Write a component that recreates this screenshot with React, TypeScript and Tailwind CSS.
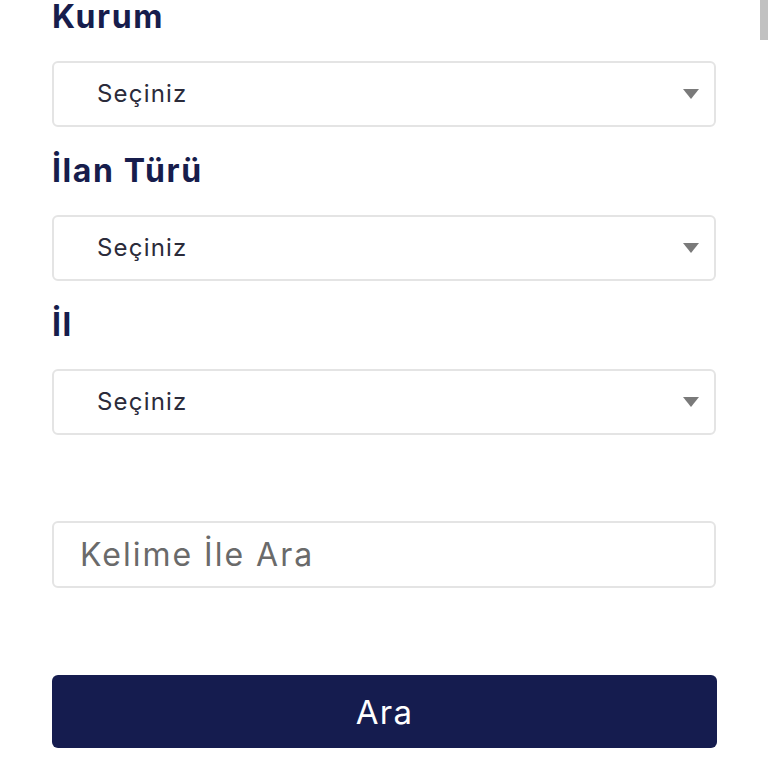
import { useState } from 'react'

const fields = ['Kurum', 'İlan Türü', 'İl']

function SelectBox({ label }: { label: string }) {
  return (
    <div className="flex flex-col">
      <label className="h-[40px] text-[32px] leading-[40px] font-bold text-[#171d4c] tracking-[1.6px]">
        {label}
      </label>
      <div className="mt-6 flex h-[66px] items-center justify-between rounded-[6px] border-2 border-[#e4e4e4] bg-white pl-[43px] pr-[14px]">
        <span className="text-[24px] text-[#2b2b3a] tracking-[1.2px]">Seçiniz</span>
        <svg width="18" height="12" viewBox="0 0 18 12">
          <path d="M1 1 L17 1 L9 11 Z" fill="#7a7a7a" />
        </svg>
      </div>
    </div>
  )
}

export default function App() {
  const [keyword, setKeyword] = useState('')

  return (
    <div className="relative h-[768px] w-[768px] overflow-hidden bg-white" style={{ fontFamily: 'Inter, "Open Sans", sans-serif' }}>
      {/* scrollbar thumb */}
      <div className="absolute right-0 top-0 h-[40px] w-[8px] bg-[#c1c1c1]" />

      <div className="-mt-[3px] flex w-[716px] flex-col gap-6 pl-[52px]">
        {fields.map((f) => (
          <SelectBox key={f} label={f} />
        ))}
      </div>

      <div className="mt-[86px] pl-[52px]">
        <input
          type="text"
          value={keyword}
          onChange={(e) => setKeyword(e.target.value)}
          placeholder="Kelime İle Ara"
          className="h-[67px] w-[664px] rounded-[6px] border-2 border-[#e4e4e4] bg-white pl-[26px] text-[32px] tracking-[2px] text-[#333] placeholder-[#6a6a6a] focus:outline-none"
        />
      </div>

      <div className="mt-[87px] pl-[52px]">
        <button className="h-[73px] w-[665px] rounded-[6px] bg-[#151c4f] pt-[2px] text-[33px] tracking-[1.2px] text-white">
          Ara
        </button>
      </div>
    </div>
  )
}
